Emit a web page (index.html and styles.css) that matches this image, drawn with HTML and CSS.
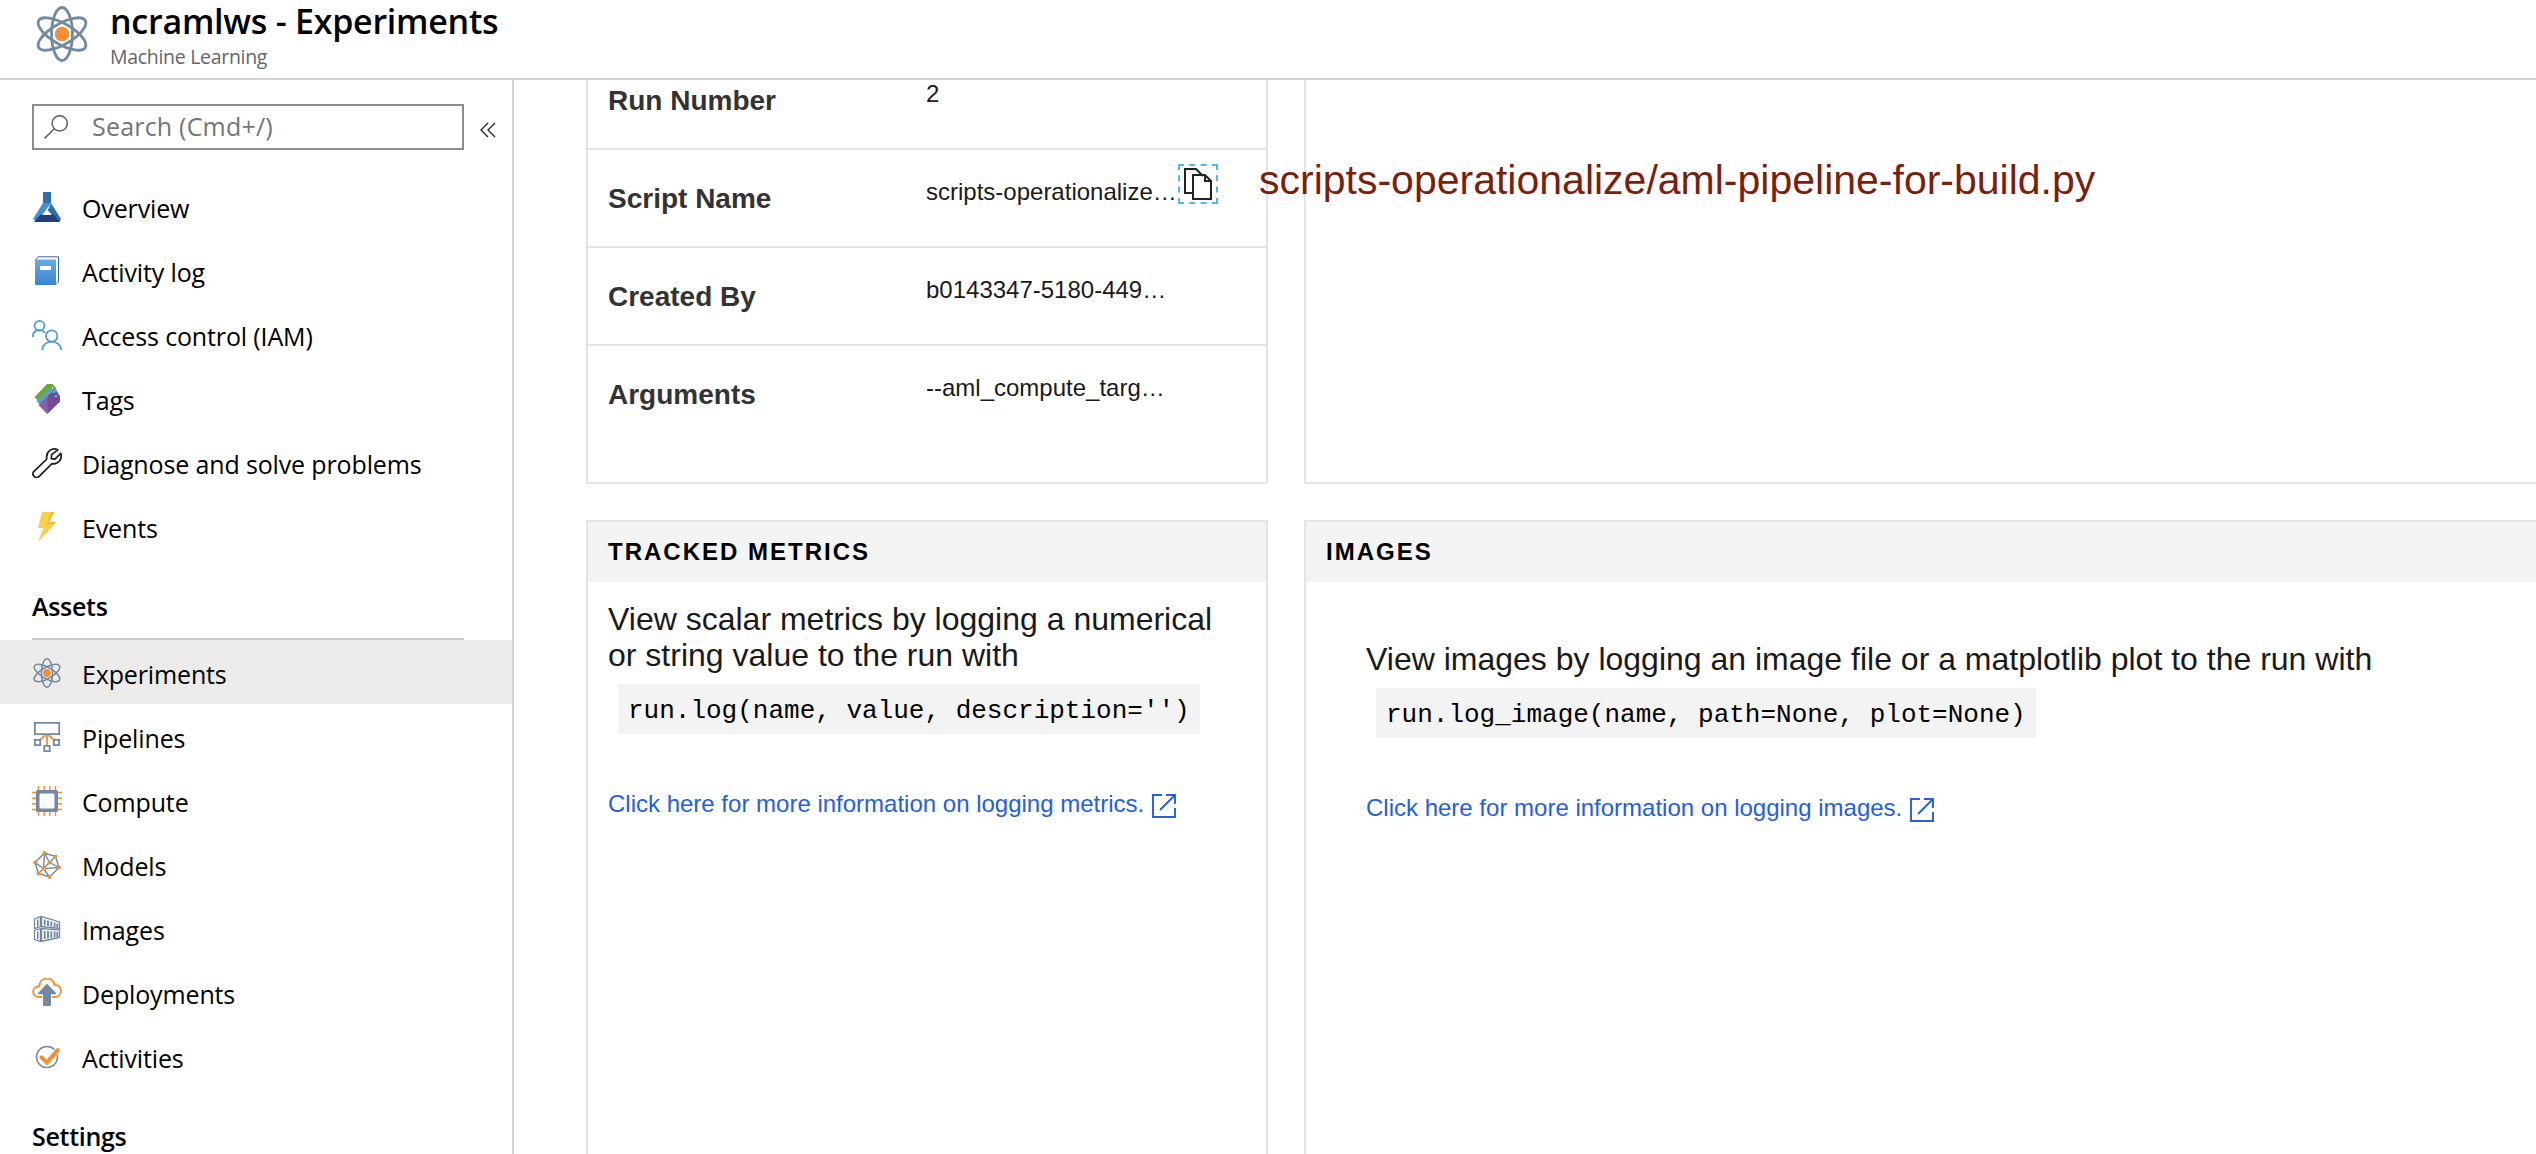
FILE: index.html
```
<!DOCTYPE html>
<html lang="en">
<head>
<meta charset="utf-8">
<title>ncramlws - Experiments</title>
<link rel="stylesheet" href="styles.css">
</head>
<body>
<svg class="defs" aria-hidden="true">
  <symbol id="atom" viewBox="0 0 30 30">
    <g fill="none" stroke="#7389a0" stroke-width="1.5">
      <ellipse cx="15" cy="15" rx="5.6" ry="14.2"/>
      <ellipse cx="15" cy="15" rx="5.6" ry="14.4" transform="rotate(60 15 15)"/>
      <ellipse cx="15" cy="15" rx="5.6" ry="14.4" transform="rotate(-60 15 15)"/>
    </g>
    <circle cx="15" cy="15" r="3.9" fill="#f29132"/>
  </symbol>
  <symbol id="external" viewBox="0 0 24 24">
    <path d="M10 1H1v22h22v-9M14 1h9v9M23 1 8 16" fill="none" stroke="#2560d8" stroke-width="1.9"/>
  </symbol>
</svg>

<header class="header">
  <svg class="header-icon"><use href="#atom"/></svg>
  <div class="header-text">
    <h1 class="title">ncramlws - Experiments</h1>
    <p class="subtitle">Machine Learning</p>
  </div>
</header>

<div class="layout">
  <aside class="sidebar">
    <div class="search-row">
      <div class="search">
        <svg class="search-icon" viewBox="0 0 24 24" fill="none" stroke="#606060" stroke-width="1.5"><circle cx="15.7" cy="8.3" r="7.6"/><path d="M10.3 13.7.6 23.4"/></svg>
        <span>Search (Cmd+/)</span>
      </div>
      <svg class="collapse" viewBox="0 0 16 16" fill="none" stroke="#222" stroke-width="1.3"><path d="M8 1 1 8l7 7M15 1 8 8l7 7"/></svg>
    </div>

    <nav class="nav">
      <a class="item">
        <svg viewBox="0 0 30 30"><path d="M11 0h8v11l-8 1z" fill="#2f6fad"/><path d="M11 11h8L5.500 30 1 27z" fill="#3f92d2"/><path d="M19 11l10 16-1.500 3-12-11.500z" fill="#2f6fad"/><path d="M8.500 22.500h13L28 30H2z" fill="#243f78"/><path d="M18.500 13.500 10 23h9.500l-4-5z" fill="#fff"/></svg>
        <span>Overview</span></a>
      <a class="item">
        <svg viewBox="0 0 30 30"><defs><linearGradient id="book" x2="0" y2="1"><stop stop-color="#68abeb"/><stop offset="1" stop-color="#3c82d0"/></linearGradient></defs><path d="M3.500 4 6 .8h20.500v25L24 28.500" fill="#fff" stroke="#38659b" stroke-width="1"/><path d="M3 3.500h21V29H4q-1 0-1-1z" fill="url(#book)"/><path d="M8 10h11v4H8z" fill="#fff"/></svg>
        <span>Activity log</span></a>
      <a class="item">
        <svg viewBox="0 0 30 30" fill="none" stroke="#4f9aca" stroke-width="1.700"><circle cx="7.500" cy="5.800" r="4.900"/><path d="M.8 17c0-8.500 9.500-8.500 12.200-3.800"/><circle cx="19.700" cy="16" r="5.700"/><path d="M10.300 30c0-11 18.800-11 18.800 0"/></svg>
        <span>Access control (IAM)</span></a>
      <a class="item">
        <svg viewBox="0 0 30 30"><path d="M2.500 13 15 0h5.500L24 4v5L8 19z" fill="#72a536"/><path d="M4.500 17 18 4.500h6l2 4v5L9 22z" fill="#5ba0cd"/><path d="M6.500 21 19 9l6.500-.5 2.500 4v5L15 30z" fill="#8862a8"/><path d="M15.500 12 19 9l6.500-.5 2.500 4v5L15.500 29.500z" fill="#774a96"/><g fill="#fff" stroke="#4c7e40" stroke-width=".8"><circle cx="20.500" cy="3.800" r="1.300"/><circle cx="22" cy="7.800" r="1.200" fill="#9ccbe4" stroke="#38799e"/><circle cx="24" cy="12.300" r="1.500" fill="#8ec2df" stroke="#2e648f"/></g></svg>
        <span>Tags</span></a>
      <a class="item">
        <svg viewBox="0 0 30 30" fill="none" stroke="#1c1c1c" stroke-width="1.700" stroke-linejoin="round"><path d="M25.800 1.800C20.500-.8 13.500 3 14.800 11L2 23.300c-3.200 3.600 1.900 8.300 5.200 5.100L20 15.600c6.500 1.200 10.500-4.800 8.800-10.200L23 11.200l-3.700-.6.300-4z"/></svg>
        <span>Diagnose and solve problems</span></a>
      <a class="item">
        <svg viewBox="0 0 30 30"><path d="M10 0h12l-5 10h7L6 30l5.500-14H6z" fill="#f8d24a"/><path d="M19 0h3l-5 10h7L6 30l14.500-17.500h-6z" fill="#f2b83c"/></svg>
        <span>Events</span></a>

      <h2 class="section">Assets</h2>
      <a class="item item-active">
        <svg><use href="#atom"/></svg>
        <span>Experiments</span></a>
      <a class="item">
        <svg viewBox="0 0 30 30" fill="none" stroke="#7389a0" stroke-width="1.800"><path d="M15 13v10M13.500 13 8 18M16.500 13l5.500 5" stroke="#f29132"/><path d="M2.900.9h24.300v11.300H2.900zM2.900 17.900h5.300v5.300H2.900zM21.800 17.900h5.300v5.300h-5.300zM12.300 23.800h5.400v5.300h-5.400z"/></svg>
        <span>Pipelines</span></a>
      <a class="item">
        <svg viewBox="0 0 30 30"><path d="M6.500 0v30M12.200 0v30M17.800 0v30M23.500 0v30M0 6.500h30M0 12.200h30M0 17.800h30M0 23.500h30" stroke="#f29132" stroke-width="1.400"/><rect x="4" y="4" width="22" height="22" rx="1.500" fill="#7389a0"/><rect x="7.500" y="7.500" width="15" height="15" rx="1.500" fill="#fff"/></svg>
        <span>Compute</span></a>
      <a class="item">
        <svg viewBox="0 0 30 30"><path d="M12.500 3 23.500 6.500 27 17.500 17.500 27 6.500 23.500 3 12.500zM12.500 3l-1 15.500L3 12.500M12.500 3l5 9.500L23.500 6.500M17.500 12.500l-6 6-5 5M17.500 12.500l9.500 5-15.500 1 6 8.500" fill="none" stroke="#7389a0" stroke-width="1.400"/><g fill="#f29132"><circle cx="12.500" cy="3" r="2"/><circle cx="23.500" cy="6.500" r="2"/><circle cx="27" cy="17.500" r="2"/><circle cx="17.500" cy="27" r="2"/><circle cx="6.500" cy="23.500" r="2"/><circle cx="3" cy="12.500" r="2"/><circle cx="11.500" cy="18.500" r="2"/><circle cx="17.500" cy="12.500" r="2"/></g></svg>
        <span>Models</span></a>
      <a class="item">
        <svg viewBox="0 0 30 30" fill="none" stroke="#7389a0"><path d="M2.500 5 9 2.500 27.500 8v6.500L9 12.500l-6.500 2zM2.500 16.500 9 14.500l18.500 1.500v7.500L9 27.500l-6.500-2z" stroke-width="1.300"/><path d="M9 2.500v10M9 14.500v13" stroke-width="2.400"/><path d="M5.700 5.500v7M5.700 17.500v7.500" stroke-width="1.600"/><path d="M12.700 5.500v6M16 6.500v5.500M19.300 7.500v5M22.600 8.500v5M25.300 9.500v4M12.700 17v8M16 17v7.500M19.300 17.500v6.500M22.600 17.500v6M25.300 18v5" stroke-width="1.900"/></svg>
        <span>Images</span></a>
      <a class="item">
        <svg viewBox="0 0 30 30"><path d="M10 19H7C-.8 19-1 8.500 7.300 8.300 7.500-1.500 21.500-1.800 22.500 7c8.600-.4 9 12-.5 12h-2" fill="none" stroke="#f29132" stroke-width="1.900"/><path d="M15 5.700 24 15v1.300h-5V27q0 1-1 1h-6q-1 0-1-1V16.300H6V15z" fill="#7389a0"/></svg>
        <span>Deployments</span></a>
      <a class="item">
        <svg viewBox="0 0 30 30" fill="none"><circle cx="15" cy="15" r="10.500" stroke="#7389a0" stroke-width="1.500"/><path d="M9.500 15.500 15 20.500 25.700 8.300" stroke="#fff" stroke-width="5.500"/><path d="M9.500 15.500 15 20.500 25.700 8.300" stroke="#f29132" stroke-width="4.300" stroke-linecap="round"/></svg>
        <span>Activities</span></a>
      <h2 class="section">Settings</h2>
    </nav>
  </aside>

  <main class="main">
    <section class="card properties">
      <div class="row"><span class="label">Run Number</span><span class="value">2</span></div>
      <div class="row"><span class="label">Script Name</span><span class="value">scripts-operationalize…</span>
        <svg class="copy" viewBox="0 0 40 40" fill="none"><path d="M0 1h40M0 39h40" stroke="#4fb7ec" stroke-width="2" stroke-dasharray="6 5.300"/><path d="M1 0v40M39 0v40" stroke="#4fb7ec" stroke-width="2" stroke-dasharray="6 5.300"/><path d="M14 29H7V5h11l7 7M15 11h12l6 6v18H15zM27 11v6h6" stroke="#222" stroke-width="2"/></svg></div>
      <div class="row"><span class="label">Created By</span><span class="value">b0143347-5180-449…</span></div>
      <div class="row row-last"><span class="label">Arguments</span><span class="value">--aml_compute_targ…</span></div>
    </section>
    <section class="card card-open"></section>
    <section class="card metrics">
      <h3 class="card-head">TRACKED METRICS</h3>
      <div class="card-body">
        <p class="hint">View scalar metrics by logging a numerical<br>or string value to the run with</p>
        <code class="code">run.log(name, value, description='')</code>
        <a class="link">Click here for more information on logging metrics.<svg><use href="#external"/></svg></a>
      </div>
    </section>
    <section class="card images">
      <h3 class="card-head">IMAGES</h3>
      <div class="card-body card-body-wide">
        <p class="hint">View images by logging an image file or a matplotlib plot to the run with</p>
        <code class="code">run.log_image(name, path=None, plot=None)</code>
        <a class="link">Click here for more information on logging images.<svg><use href="#external"/></svg></a>
      </div>
    </section>
  </main>
</div>
<div class="annotation">scripts-operationalize/aml-pipeline-for-build.py</div>
</body>
</html>
```
FILE: styles.css
```
* { box-sizing: border-box; }

body {
  position: relative;
  display: flex;
  flex-direction: column;
  height: 1154px;
  margin: 0;
  overflow: hidden;
  background: #fff;
  color: #000;
  font-family: "Open Sans", "Noto Sans", sans-serif;
}

h1, h2, h3, p { margin: 0; }
svg { display: block; flex: none; }
.defs { position: absolute; width: 0; height: 0; }

/* Header */
.header {
  display: flex;
  flex: none;
  gap: 20px;
  height: 80px;
  padding-left: 34px;
  border-bottom: 2px solid #d4d4d4;
}
.header-icon { width: 56px; height: 56px; margin-top: 6px; }
.title {
  font-size: 34px;
  font-weight: 600;
  line-height: 42px;
  letter-spacing: -0.25px;
}
.subtitle {
  color: #666;
  font-size: 19.5px;
  line-height: 30px;
  letter-spacing: -0.3px;
}

.layout { display: flex; flex: 1; min-height: 0; }

/* Sidebar */
.sidebar {
  flex: none;
  width: 514px;
  padding-top: 24px;
  overflow: hidden;
  border-right: 2px solid #d4d4d4;
}
.search-row {
  display: flex;
  align-items: center;
  gap: 16px;
  margin-bottom: 24px;
  padding-left: 32px;
}
.search {
  display: flex;
  align-items: center;
  gap: 24px;
  width: 432px;
  height: 46px;
  padding: 0 10px 2px;
  border: 2px solid #8c8c8c;
  color: #757575;
  font-size: 25px;
  line-height: 40px;
  letter-spacing: 0.2px;
}
.search-icon { width: 24px; height: 24px; margin-top: 2px; }
.collapse { width: 16px; height: 16px; margin-top: 5px; }

.item {
  display: flex;
  gap: 20px;
  height: 64px;
  padding-left: 32px;
  font-size: 25px;
  line-height: 69px;
  letter-spacing: -0.14px;
}
.item svg { width: 30px; height: 30px; margin-top: 18px; }
.item-active { background: #edebe9; }
.section {
  height: 82px;
  margin: 0 48px 0 32px;
  padding-top: 20px;
  border-bottom: 2px solid #c8c8c8;
  font-size: 25px;
  font-weight: 600;
  line-height: 57px;
  letter-spacing: -0.3px;
}

/* Run details */
.main {
  display: grid;
  flex: 1;
  grid-template-columns: 682px 1240px;
  grid-template-rows: 404px 1fr;
  gap: 36px;
  min-width: 0;
  padding-left: 72px;
  overflow: hidden;
  font-family: "Liberation Sans", Arial, sans-serif;
}
.card {
  overflow: hidden;
  border: 2px solid #e4e4e4;
}
.properties, .card-open { border-top: 0; }
.metrics, .images { border-bottom: 0; }
.properties {
  display: flex;
  flex-direction: column;
  justify-content: flex-end;
}
.row {
  display: flex;
  flex: none;
  align-items: flex-start;
  height: 98px;
  padding-left: 20px;
  border-bottom: 2px solid #e4e4e4;
}
.row-last { height: 136px; border-bottom: 0; }
.label {
  width: 318px;
  color: #333;
  font-size: 28px;
  font-weight: 700;
  line-height: 98px;
}
.value { color: #1a1a1a; font-size: 24px; line-height: 84px; }
.copy { width: 40px; height: 40px; margin: 14px 0 0 1px; }

.card-head {
  padding-left: 20px;
  background: #f3f3f3;
  font-size: 24px;
  font-weight: 700;
  line-height: 60px;
  letter-spacing: 2px;
}
.card-body { padding: 19px 0 0 20px; }
.card-body-wide { padding: 59px 0 0 60px; }
.hint { color: #1a1a1a; font-size: 32px; line-height: 36px; white-space: nowrap; }
.code {
  display: block;
  width: max-content;
  height: 50px;
  margin: 11px 0 50px 10px;
  padding: 0 10px;
  background: #f3f3f3;
  font-family: "Liberation Mono", "Courier New", monospace;
  font-size: 26px;
  line-height: 54px;
}
.link {
  display: flex;
  gap: 8px;
  color: #2560d8;
  font-size: 24px;
  line-height: 40px;
}
.link svg { width: 24px; height: 24px; margin-top: 10px; }

/* Note laid over the cards */
.annotation {
  position: absolute;
  top: 156px;
  left: 1259px;
  color: #7b1e0c;
  font-family: "Liberation Sans", Arial, sans-serif;
  font-size: 41px;
  line-height: 48px;
  white-space: nowrap;
}
```
